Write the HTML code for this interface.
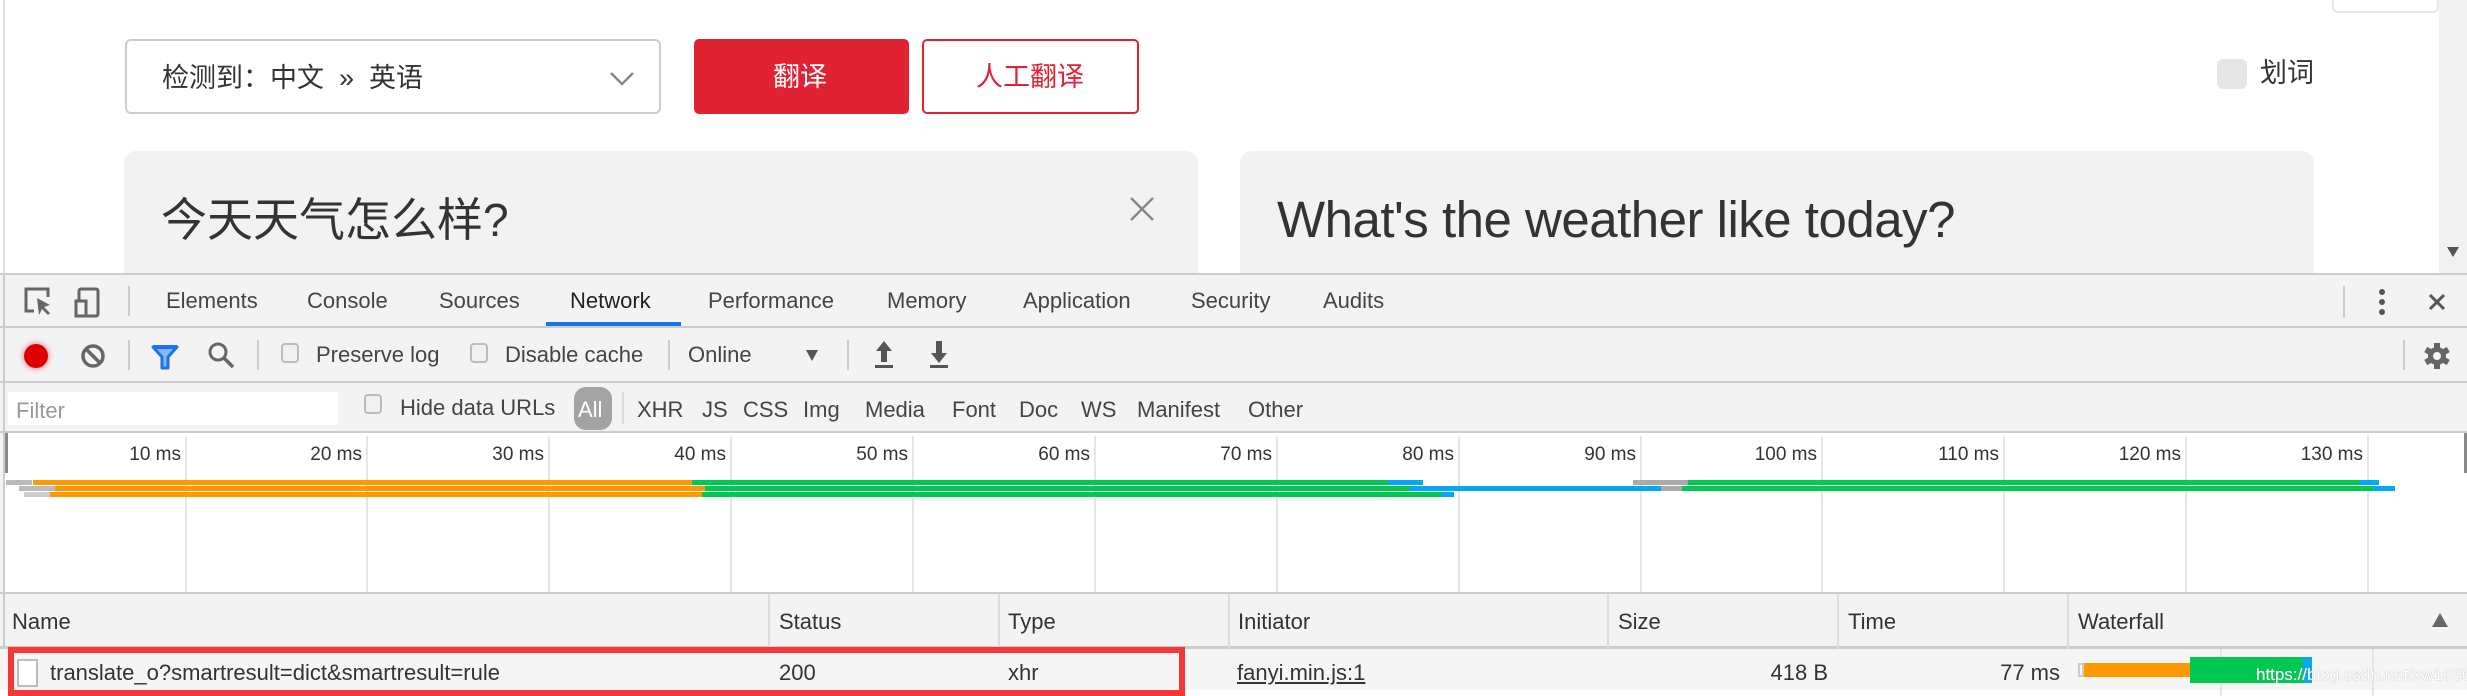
<!DOCTYPE html>
<html><head><meta charset="utf-8">
<style>
*{margin:0;padding:0;box-sizing:border-box}
body{width:2467px;height:696px;overflow:hidden;background:#fff;position:relative;font-family:"Liberation Sans","Noto Sans CJK SC",sans-serif;color:#333}
.a{position:absolute}
.t{position:absolute;white-space:nowrap;font-size:22px;color:#333;line-height:1}
.dt{color:#444}
.vl{position:absolute;width:2px;background:#ccc}
.cb{position:absolute;width:18px;height:20px;border:2px solid #bbb;border-radius:4px;background:#f0f0f0}
.gl{position:absolute;top:436px;height:157px;width:2px;background:#e6e6e6}
.lab{position:absolute;top:444px;font-size:19px;color:#333;text-align:right;width:100px}
.bar{position:absolute;height:5px}
</style></head><body>
<div class="a" style="left:3px;top:0;width:2px;height:274px;background:#e0e0e0"></div>
<div class="a" style="left:2332px;top:-4px;width:107px;height:17px;border:2px solid #e8e8e8;border-radius:6px"></div>
<div class="a" style="left:2439px;top:0;width:28px;height:274px;background:#f1f1f1"></div>
<div class="a" style="left:2447px;top:247px;width:0;height:0;border-left:6px solid transparent;border-right:6px solid transparent;border-top:10px solid #555"></div>

<div class="a" style="left:125px;top:39px;width:536px;height:75px;border:2px solid #ccc;border-radius:6px"></div>
<div class="t" style="left:162px;top:65px;font-size:27px">检测到：中文 &nbsp;»&nbsp; 英语</div>
<svg class="a" style="left:608px;top:70px" width="28" height="18"><path d="M3 3 L14 14 L25 3" stroke="#888" stroke-width="2.5" fill="none"/></svg>
<div class="a" style="left:694px;top:39px;width:215px;height:75px;background:#e12232;border-radius:5px"></div>
<div class="t" style="left:773px;top:64px;font-size:27px;color:#fff">翻译</div>
<div class="a" style="left:922px;top:39px;width:217px;height:75px;border:2px solid #e12232;border-radius:5px"></div>
<div class="t" style="left:976px;top:64px;font-size:27px;color:#e12232">人工翻译</div>
<div class="a" style="left:2217px;top:59px;width:30px;height:30px;background:#e6e6e6;border-radius:6px"></div>
<div class="t" style="left:2260px;top:60px;font-size:27px">划词</div>

<div class="a" style="left:124px;top:151px;width:1074px;height:140px;background:#f2f2f2;border-radius:12px"></div>
<div class="t" style="left:161px;top:197px;font-size:46px;color:#333">今天天气怎么样?</div>
<svg class="a" style="left:1128px;top:195px" width="28" height="28"><path d="M3 3 L25 25 M25 3 L3 25" stroke="#888" stroke-width="2.5"/></svg>
<div class="a" style="left:1240px;top:151px;width:1074px;height:140px;background:#f2f2f2;border-radius:12px"></div>
<div class="t" style="left:1277px;top:194px;font-size:51px;color:#333;letter-spacing:-0.5px">What's the weather like today?</div>

<div class="a" style="left:0;top:274px;width:2467px;height:422px;background:#f3f3f3"></div>
<div class="a" style="left:0;top:273px;width:2467px;height:2px;background:#ccc"></div>
<div class="a" style="left:0;top:326px;width:2467px;height:2px;background:#ccc"></div>
<div class="a" style="left:0;top:381px;width:2467px;height:2px;background:#ccc"></div>
<div class="a" style="left:0;top:431px;width:2467px;height:2px;background:#ccc"></div>
<div class="a" style="left:3px;top:274px;width:2px;height:422px;background:#ccc"></div>

<svg class="a" style="left:22px;top:285px" width="90" height="34"><path d="M12 26 H4 V4 H26 V12" stroke="#666" stroke-width="3" fill="none"/><path d="M15 13 L28 20 L22 22 L28 28 L26 30 L20 24 L17 30 Z" fill="#666"/><rect x="57" y="4" width="19" height="27" rx="2" stroke="#666" stroke-width="3" fill="none"/><rect x="54" y="16" width="10" height="15" stroke="#666" stroke-width="3" fill="#f3f3f3"/></svg>
<div class="vl" style="left:128px;top:286px;height:30px"></div>
<div class="t dt" style="left:166px;top:290px">Elements</div>
<div class="t dt" style="left:307px;top:290px">Console</div>
<div class="t dt" style="left:439px;top:290px">Sources</div>
<div class="t" style="left:570px;top:290px;color:#222">Network</div>
<div class="a" style="left:546px;top:322px;width:135px;height:4px;background:#1a73e8"></div>
<div class="t dt" style="left:708px;top:290px">Performance</div>
<div class="t dt" style="left:887px;top:290px">Memory</div>
<div class="t dt" style="left:1023px;top:290px">Application</div>
<div class="t dt" style="left:1191px;top:290px">Security</div>
<div class="t dt" style="left:1323px;top:290px">Audits</div>
<div class="vl" style="left:2343px;top:286px;height:32px"></div>
<svg class="a" style="left:2372px;top:286px" width="80" height="34"><circle cx="10" cy="6" r="3" fill="#555"/><circle cx="10" cy="16" r="3" fill="#555"/><circle cx="10" cy="26" r="3" fill="#555"/><path d="M58 9 L72 23 M72 9 L58 23" stroke="#555" stroke-width="3"/></svg>

<div class="a" style="left:24px;top:344px;width:24px;height:24px;border-radius:50%;background:#d00;box-shadow:0 0 5px 2px rgba(220,0,0,.3)"></div>
<svg class="a" style="left:80px;top:343px" width="26" height="26"><circle cx="13" cy="13" r="10" stroke="#666" stroke-width="3.5" fill="none"/><path d="M6 6 L20 20" stroke="#666" stroke-width="3.5"/></svg>
<div class="vl" style="left:128px;top:340px;height:30px"></div>
<svg class="a" style="left:150px;top:343px" width="30" height="28"><path d="M3 4 H27 L18 14 V25 H12 V14 Z" stroke="#1a73e8" stroke-width="3" fill="#8ab4f8" stroke-linejoin="round"/><path d="M3 4 H27" stroke="#1a73e8" stroke-width="4"/></svg>
<svg class="a" style="left:207px;top:341px" width="30" height="30"><circle cx="11" cy="11" r="8" stroke="#666" stroke-width="3" fill="none"/><path d="M17 17 L26 26" stroke="#666" stroke-width="3.5"/></svg>
<div class="vl" style="left:257px;top:340px;height:30px"></div>
<div class="cb" style="left:281px;top:343px"></div>
<div class="t dt" style="left:316px;top:344px">Preserve log</div>
<div class="cb" style="left:470px;top:343px"></div>
<div class="t dt" style="left:505px;top:344px">Disable cache</div>
<div class="vl" style="left:668px;top:340px;height:30px"></div>
<div class="t dt" style="left:688px;top:344px">Online</div>
<div class="a" style="left:806px;top:350px;border-left:6px solid transparent;border-right:6px solid transparent;border-top:11px solid #555"></div>
<div class="vl" style="left:847px;top:340px;height:30px"></div>
<svg class="a" style="left:872px;top:339px" width="90" height="32"><path d="M12 2 L4 12 H9 V23 H15 V12 H20 Z" fill="#555"/><rect x="3" y="26" width="18" height="3" fill="#555"/><path d="M67 24 L59 14 H64 V2 H70 V14 H75 Z" fill="#555"/><rect x="58" y="26" width="18" height="3" fill="#555"/></svg>
<div class="vl" style="left:2403px;top:340px;height:30px"></div>
<svg class="a" style="left:2422px;top:341px" width="30" height="30"><g fill="#666" transform="translate(15 15)"><circle r="9"/><rect x="-3" y="-13" width="6" height="26"/><rect x="-3" y="-13" width="6" height="26" transform="rotate(60)"/><rect x="-3" y="-13" width="6" height="26" transform="rotate(120)"/></g><circle cx="15" cy="15" r="4" fill="#f3f3f3"/></svg>

<div class="a" style="left:8px;top:392px;width:330px;height:33px;background:#fff"></div>
<div class="t" style="left:16px;top:400px;color:#999">Filter</div>
<div class="cb" style="left:364px;top:394px"></div>
<div class="t dt" style="left:400px;top:397px">Hide data URLs</div>
<div class="a" style="left:574px;top:387px;width:38px;height:43px;background:#a3a3a3;border-radius:12px"></div>
<div class="t" style="left:578px;top:399px;color:#fff">All</div>
<div class="vl" style="left:622px;top:392px;height:32px;background:#ddd"></div>
<div class="t dt" style="left:637px;top:399px">XHR</div>
<div class="t dt" style="left:702px;top:399px">JS</div>
<div class="t dt" style="left:743px;top:399px">CSS</div>
<div class="t dt" style="left:803px;top:399px">Img</div>
<div class="t dt" style="left:865px;top:399px">Media</div>
<div class="t dt" style="left:952px;top:399px">Font</div>
<div class="t dt" style="left:1019px;top:399px">Doc</div>
<div class="t dt" style="left:1081px;top:399px">WS</div>
<div class="t dt" style="left:1137px;top:399px">Manifest</div>
<div class="t dt" style="left:1248px;top:399px">Other</div>

<div class="a" style="left:5px;top:433px;width:2462px;height:160px;background:#fff"></div>
<div class="a" style="left:5px;top:433px;width:3px;height:40px;background:#888"></div>
<div class="a" style="left:2464px;top:433px;width:3px;height:40px;background:#888"></div>
<div class="gl" style="left:185px"></div><div class="gl" style="left:366px"></div><div class="gl" style="left:548px"></div><div class="gl" style="left:730px"></div><div class="gl" style="left:912px"></div><div class="gl" style="left:1094px"></div><div class="gl" style="left:1276px"></div><div class="gl" style="left:1458px"></div><div class="gl" style="left:1640px"></div><div class="gl" style="left:1821px"></div><div class="gl" style="left:2003px"></div><div class="gl" style="left:2185px"></div><div class="gl" style="left:2367px"></div>
<div class="lab" style="left:81px">10 ms</div><div class="lab" style="left:262px">20 ms</div><div class="lab" style="left:444px">30 ms</div><div class="lab" style="left:626px">40 ms</div><div class="lab" style="left:808px">50 ms</div><div class="lab" style="left:990px">60 ms</div><div class="lab" style="left:1172px">70 ms</div><div class="lab" style="left:1354px">80 ms</div><div class="lab" style="left:1536px">90 ms</div><div class="lab" style="left:1717px">100 ms</div><div class="lab" style="left:1899px">110 ms</div><div class="lab" style="left:2081px">120 ms</div><div class="lab" style="left:2263px">130 ms</div>

<div class="bar" style="left:6px;top:480px;width:26px;background:#bbb"></div>
<div class="bar" style="left:33px;top:480px;width:659px;background:#f90"></div>
<div class="bar" style="left:692px;top:480px;width:696px;background:#00c853"></div>
<div class="bar" style="left:1388px;top:480px;width:35px;background:#03a9f4"></div>
<div class="bar" style="left:1633px;top:480px;width:55px;background:#aaa"></div>
<div class="bar" style="left:1688px;top:480px;width:672px;background:#00c853"></div>
<div class="bar" style="left:2360px;top:480px;width:19px;background:#03a9f4"></div>

<div class="bar" style="left:19px;top:486px;width:36px;background:#bbb"></div>
<div class="bar" style="left:55px;top:486px;width:650px;background:#f90"></div>
<div class="bar" style="left:705px;top:486px;width:705px;background:#00c853"></div>
<div class="bar" style="left:1410px;top:486px;width:251px;background:#03a9f4"></div>
<div class="bar" style="left:1661px;top:486px;width:21px;background:#aaa"></div>
<div class="bar" style="left:1682px;top:486px;width:691px;background:#00c853"></div>
<div class="bar" style="left:2373px;top:486px;width:22px;background:#03a9f4"></div>

<div class="bar" style="left:24px;top:492px;width:26px;background:#ccc"></div>
<div class="bar" style="left:50px;top:492px;width:652px;background:#f90"></div>
<div class="bar" style="left:702px;top:492px;width:739px;background:#00c853"></div>
<div class="bar" style="left:1441px;top:492px;width:13px;background:#03a9f4"></div>

<div class="a" style="left:0;top:592px;width:2467px;height:2px;background:#ccc"></div>
<div class="a" style="left:0;top:646px;width:2467px;height:3px;background:#ccc"></div>
<div class="vl" style="left:768px;top:594px;height:102px;background:#ddd"></div>
<div class="vl" style="left:998px;top:594px;height:102px;background:#ddd"></div>
<div class="vl" style="left:1228px;top:594px;height:102px;background:#ddd"></div>
<div class="vl" style="left:1607px;top:594px;height:102px;background:#ddd"></div>
<div class="vl" style="left:1837px;top:594px;height:102px;background:#ddd"></div>
<div class="vl" style="left:2067px;top:594px;height:102px;background:#ddd"></div>
<div class="t" style="left:12px;top:611px">Name</div>
<div class="t" style="left:779px;top:611px">Status</div>
<div class="t" style="left:1008px;top:611px">Type</div>
<div class="t" style="left:1238px;top:611px">Initiator</div>
<div class="t" style="left:1618px;top:611px">Size</div>
<div class="t" style="left:1848px;top:611px">Time</div>
<div class="t" style="left:2078px;top:611px">Waterfall</div>
<div class="a" style="left:2432px;top:613px;border-left:8px solid transparent;border-right:8px solid transparent;border-top:0;border-bottom:14px solid #666"></div>

<div class="a" style="left:0;top:649px;width:2467px;height:41px;background:#f5f5f5"></div>
<div class="a" style="left:0;top:690px;width:2467px;height:6px;background:#fff"></div>
<div class="vl" style="left:2220px;top:649px;height:47px;background:#e6e6e6"></div>
<div class="vl" style="left:2372px;top:649px;height:47px;background:#e6e6e6"></div>
<div class="a" style="left:8px;top:647px;width:1177px;height:49px;border:6px solid #f43838"></div>
<div class="a" style="left:17px;top:659px;width:21px;height:28px;border:2px solid #bbb;background:#fff"></div>
<div class="t" style="left:50px;top:662px">translate_o?smartresult=dict&amp;smartresult=rule</div>
<div class="t" style="left:779px;top:662px">200</div>
<div class="t" style="left:1008px;top:662px">xhr</div>
<div class="t" style="left:1237px;top:662px;text-decoration:underline">fanyi.min.js:1</div>
<div class="t" style="left:1700px;top:662px;width:128px;text-align:right">418 B</div>
<div class="t" style="left:1930px;top:662px;width:130px;text-align:right">77 ms</div>
<div class="a" style="left:2078px;top:663px;width:6px;height:14px;border:2px solid #ccc"></div>
<div class="a" style="left:2084px;top:663px;width:106px;height:14px;background:#f90"></div>
<div class="a" style="left:2190px;top:657px;width:113px;height:26px;background:#00c853"></div>
<div class="a" style="left:2303px;top:657px;width:9px;height:26px;background:#03a9f4"></div>
<div class="t" style="left:2256px;top:666px;font-size:17px;color:#fff;text-shadow:0 0 1px #999">https://blog.csdn.net/xw1680</div>
</body></html>
